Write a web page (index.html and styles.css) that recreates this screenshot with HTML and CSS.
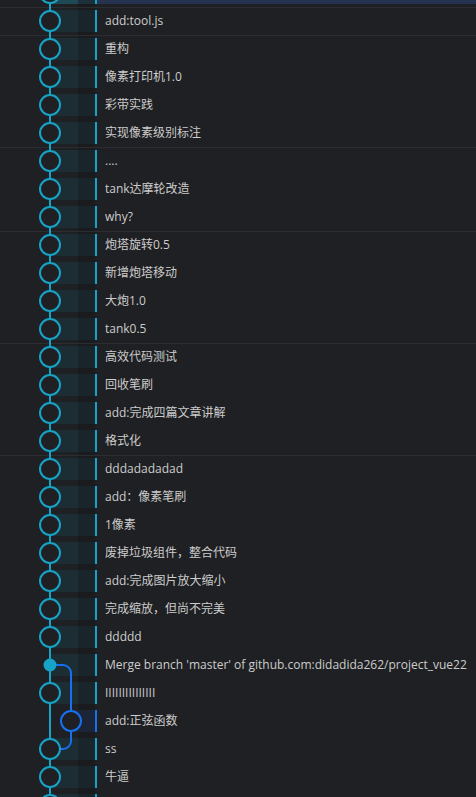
FILE: index.html
```html
<!DOCTYPE html>
<html>
<head>
<meta charset="utf-8">
<link rel="stylesheet" href="styles.css">
</head>
<body>
<div class="graph">
  <svg class="lines" width="96" height="840" viewBox="0 0 96 840">
    <line x1="50" y1="0" x2="50" y2="840" stroke="#17a2c8" stroke-width="2"/>
    <path d="M50 686 H63 A8 8 0 0 1 71 694 V742" fill="none" stroke="#1670f0" stroke-width="2"/>
    <path d="M71 742 V762 A8 8 0 0 1 63 770 H52" fill="none" stroke="#1670f0" stroke-width="2"/>
    <g fill="#1f2023" stroke="#17a2c8" stroke-width="2">
      <circle cx="50" cy="14" r="10"/>
      <circle cx="50" cy="42" r="10"/>
      <circle cx="50" cy="70" r="10"/>
      <circle cx="50" cy="98" r="10"/>
      <circle cx="50" cy="126" r="10"/>
      <circle cx="50" cy="154" r="10"/>
      <circle cx="50" cy="182" r="10"/>
      <circle cx="50" cy="210" r="10"/>
      <circle cx="50" cy="238" r="10"/>
      <circle cx="50" cy="266" r="10"/>
      <circle cx="50" cy="294" r="10"/>
      <circle cx="50" cy="322" r="10"/>
      <circle cx="50" cy="350" r="10"/>
      <circle cx="50" cy="378" r="10"/>
      <circle cx="50" cy="406" r="10"/>
      <circle cx="50" cy="434" r="10"/>
      <circle cx="50" cy="462" r="10"/>
      <circle cx="50" cy="490" r="10"/>
      <circle cx="50" cy="518" r="10"/>
      <circle cx="50" cy="546" r="10"/>
      <circle cx="50" cy="574" r="10"/>
      <circle cx="50" cy="602" r="10"/>
      <circle cx="50" cy="630" r="10"/>
      <circle cx="50" cy="658" r="10"/>
      <circle cx="50" cy="714" r="10"/>
      <circle cx="50" cy="770" r="10"/>
      <circle cx="50" cy="798" r="10"/>
      <circle cx="50" cy="826" r="10"/>
    </g>
    <circle cx="50" cy="686" r="6.5" fill="#17a2c8"/>
    <circle cx="71" cy="742" r="10" fill="#1f2023" stroke="#1670f0" stroke-width="2"/>
  </svg>

  <div class="row selected"><div class="lane"><div class="tint"></div></div><div class="bar"></div><div class="msg"></div></div>
  <div class="row sep"><div class="lane"><div class="tint"></div></div><div class="bar"></div><div class="msg">add:tool.js</div></div>
  <div class="row sep"><div class="lane"><div class="tint"></div></div><div class="bar"></div><div class="msg">重构</div></div>
  <div class="row"><div class="lane"><div class="tint"></div></div><div class="bar"></div><div class="msg">像素打印机1.0</div></div>
  <div class="row"><div class="lane"><div class="tint"></div></div><div class="bar"></div><div class="msg">彩带实践</div></div>
  <div class="row"><div class="lane"><div class="tint"></div></div><div class="bar"></div><div class="msg">实现像素级别标注</div></div>
  <div class="row sep"><div class="lane"><div class="tint"></div></div><div class="bar"></div><div class="msg">....</div></div>
  <div class="row"><div class="lane"><div class="tint"></div></div><div class="bar"></div><div class="msg">tank达摩轮改造</div></div>
  <div class="row"><div class="lane"><div class="tint"></div></div><div class="bar"></div><div class="msg">why?</div></div>
  <div class="row sep"><div class="lane"><div class="tint"></div></div><div class="bar"></div><div class="msg">炮塔旋转0.5</div></div>
  <div class="row"><div class="lane"><div class="tint"></div></div><div class="bar"></div><div class="msg">新增炮塔移动</div></div>
  <div class="row"><div class="lane"><div class="tint"></div></div><div class="bar"></div><div class="msg">大炮1.0</div></div>
  <div class="row"><div class="lane"><div class="tint"></div></div><div class="bar"></div><div class="msg">tank0.5</div></div>
  <div class="row sep"><div class="lane"><div class="tint"></div></div><div class="bar"></div><div class="msg">高效代码测试</div></div>
  <div class="row"><div class="lane"><div class="tint"></div></div><div class="bar"></div><div class="msg">回收笔刷</div></div>
  <div class="row"><div class="lane"><div class="tint"></div></div><div class="bar"></div><div class="msg">add:完成四篇文章讲解</div></div>
  <div class="row"><div class="lane"><div class="tint"></div></div><div class="bar"></div><div class="msg">格式化</div></div>
  <div class="row sep"><div class="lane"><div class="tint"></div></div><div class="bar"></div><div class="msg">dddadadadad</div></div>
  <div class="row"><div class="lane"><div class="tint"></div></div><div class="bar"></div><div class="msg">add：像素笔刷</div></div>
  <div class="row"><div class="lane"><div class="tint"></div></div><div class="bar"></div><div class="msg">1像素</div></div>
  <div class="row"><div class="lane"><div class="tint"></div></div><div class="bar"></div><div class="msg">废掉垃圾组件，整合代码</div></div>
  <div class="row"><div class="lane"><div class="tint"></div></div><div class="bar"></div><div class="msg">add:完成图片放大缩小</div></div>
  <div class="row"><div class="lane"><div class="tint"></div></div><div class="bar"></div><div class="msg">完成缩放，但尚不完美</div></div>
  <div class="row"><div class="lane"><div class="tint"></div></div><div class="bar"></div><div class="msg">ddddd</div></div>
  <div class="row"><div class="lane"><div class="tint"></div></div><div class="bar"></div><div class="msg">Merge branch 'master' of github.com:didadida262/project_vue22</div></div>
  <div class="row"><div class="lane"><div class="tint"></div></div><div class="bar"></div><div class="msg">IIIIIIIIIIIIIII</div></div>
  <div class="row blue"><div class="lane"><div class="tint"></div></div><div class="bar"></div><div class="msg">add:正弦函数</div></div>
  <div class="row"><div class="lane"><div class="tint"></div></div><div class="bar"></div><div class="msg">ss</div></div>
  <div class="row"><div class="lane"><div class="tint"></div></div><div class="bar"></div><div class="msg">牛逼</div></div>
  <div class="row"><div class="lane"><div class="tint"></div></div><div class="bar"></div><div class="msg"></div></div>
</div>
</body>
</html>
```

FILE: styles.css
```css
html, body {
  margin: 0;
  padding: 0;
  background: #1f2023;
  overflow: hidden;
}

body {
  font-family: "Open Sans", "Noto Sans CJK SC", sans-serif;
  font-size: 12px;
  color: #cccccc;
}

.graph {
  position: relative;
  margin-top: -21px;
  display: flex;
  flex-direction: column;
}

.lines {
  position: absolute;
  left: 0;
  top: 0;
  z-index: 2;
  pointer-events: none;
}

.row {
  display: flex;
  height: 28px;
  box-sizing: border-box;
  padding: 3px 0;
  background: linear-gradient(to right, transparent 78px, #1a1b1e 78px, #1a1b1e 95px, transparent 95px);
}

.row.sep {
  box-shadow: inset 0 1px 0 #2c2d31;
}

.lane {
  width: 95px;
  padding-left: 50px;
  box-sizing: border-box;
  display: flex;
}

.tint {
  flex: 1;
  background: linear-gradient(to right, #1c2d33 0, #1c2d33 28px, #19252a 28px);
}

.bar {
  width: 2px;
  background: #17a2c8;
}

.msg {
  flex: 1;
  padding-left: 8px;
  line-height: 22px;
  white-space: nowrap;
  overflow: hidden;
}

.row.selected .tint {
  background: linear-gradient(to right, #1e4a55 0, #1e4a55 28px, #1b3038 28px);
}

.row.selected .msg {
  background: #263350;
}

.row.blue .lane {
  padding-left: 71px;
}

.row.blue .tint {
  background: linear-gradient(to right, #1d2538 0, #1d2538 7px, #1c2437 7px);
}

.row.blue .bar {
  background: #1670f0;
}
```
